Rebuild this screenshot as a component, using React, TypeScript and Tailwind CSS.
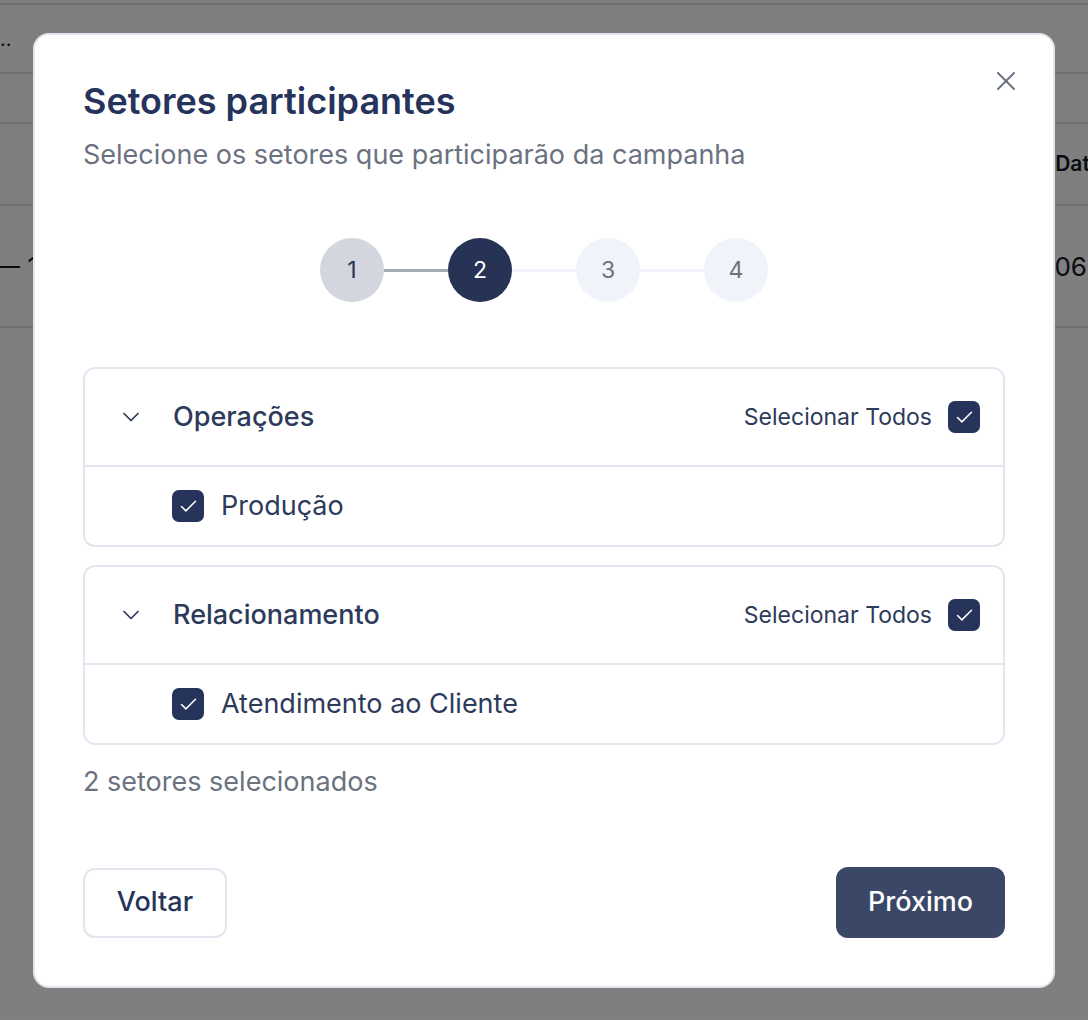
import React, { useState } from 'react';
import { ChevronDown, Check, X } from 'lucide-react';

const font = { fontFamily: 'Inter, "Noto Sans", sans-serif' };

interface Group {
  name: string;
  items: string[];
}

const groups: Group[] = [
  { name: 'Operações', items: ['Produção'] },
  { name: 'Relacionamento', items: ['Atendimento ao Cliente'] },
];

const Box: React.FC<{ checked: boolean }> = ({ checked }) => (
  <span
    className={`flex h-8 w-8 shrink-0 items-center justify-center rounded-[7px] ${
      checked ? 'bg-[#26335a]' : 'border-2 border-[#d5dae6] bg-white'
    }`}
  >
    {checked && <Check size={21} strokeWidth={1.75} className="text-white" />}
  </span>
);

const Stepper: React.FC = () => (
  <div className="flex items-center justify-center">
    <div className="flex h-16 w-16 items-center justify-center rounded-full bg-[#d3d6de] text-[23px] text-[#2a3550]">1</div>
    <div className="h-[3px] w-16 bg-[#a5aab7]" />
    <div className="flex h-16 w-16 items-center justify-center rounded-full bg-[#263354] text-[23px] text-white">2</div>
    <div className="h-[3px] w-16 bg-[#f0f3fa]" />
    <div className="flex h-16 w-16 items-center justify-center rounded-full bg-[#f0f3fa] text-[23px] text-[#6b7180]">3</div>
    <div className="h-[3px] w-16 bg-[#f0f3fa]" />
    <div className="flex h-16 w-16 items-center justify-center rounded-full bg-[#f0f3fa] text-[23px] text-[#6b7180]">4</div>
  </div>
);

const SectorCard: React.FC<{ group: Group }> = ({ group }) => (
  <div className="rounded-[12px] border-2 border-[#e3e6ef] bg-white">
    <div className="flex h-[98px] items-center justify-between border-b-2 border-[#e3e6ef] pl-[32px] pr-[23px]">
      <div className="flex items-center">
        <ChevronDown size={28} strokeWidth={1.5} className="text-[#2d3a5a]" />
        <span className="ml-[28px] text-[27px] font-medium text-[#2d3a5a]">{group.name}</span>
      </div>
      <div className="flex items-center gap-4">
        <span className="text-[23px] text-[#2d3a5a]">Selecionar Todos</span>
        <Box checked />
      </div>
    </div>
    {group.items.map((item) => (
      <div key={item} className="flex h-[78px] items-center pl-[87px]">
        <Box checked />
        <span className="ml-[17px] text-[27px] text-[#2d3a5a]">{item}</span>
      </div>
    ))}
  </div>
);

export default function App() {
  const [open] = useState(true);

  return (
    <div className="relative h-[1020px] w-[1088px] overflow-hidden bg-white" style={font}>
      {/* page behind the dialog */}
      <div className="flex flex-col text-[#111827]">
        <div className="h-[5px] border-b-2 border-[#dedede]" />
        <div className="flex h-[69px] items-center border-b-2 border-[#dedede] text-[20px]">..</div>
        <div className="h-[50px] border-b-2 border-[#dedede]" />
        <div className="flex h-[82px] items-center justify-end border-b-2 border-[#dedede] text-[21px] font-semibold">
          <span className="mr-[-14px]">Data</span>
        </div>
        <div className="flex h-[122px] items-center justify-between border-b-2 border-[#dedede] text-[26px]">
          <span className="ml-[-6px]">— 1</span>
          <span className="mr-[1px]">06</span>
        </div>
      </div>

      {open && (
        <div className="absolute inset-0 bg-black/50">
          <div className="absolute left-[33px] top-[33px] w-[1022px] rounded-[16px] border-2 border-[#e3e6ef] bg-white px-12 pb-12 pt-[44px]">
            <button className="absolute right-[31px] top-[30px] text-[#6b7280]">
              <X size={32} strokeWidth={1.5} />
            </button>
            <h2 className="text-[36px] font-semibold leading-[44px] text-[#26335a]">Setores participantes</h2>
            <p className="mt-[14px] text-[27px] leading-[36px] text-[#6b7280]">Selecione os setores que participarão da campanha</p>

            <div className="mt-[65px]">
              <Stepper />
            </div>

            <div className="mt-[65px] flex flex-col gap-[18px]">
              {groups.map((g) => (
                <SectorCard key={g.name} group={g} />
              ))}
            </div>

            <p className="mt-[19px] text-[27px] leading-[36px] text-[#6b7280]">2 setores selecionados</p>

            <div className="mt-[67px] flex items-center justify-between">
              <button className="h-[70px] w-[144px] rounded-[12px] border-2 border-[#e3e6ef] bg-white text-[27px] font-medium text-[#26335a]">
                Voltar
              </button>
              <button className="h-[71px] w-[169px] rounded-[12px] bg-[#3a4766] text-[27px] font-medium text-white">
                Próximo
              </button>
            </div>
          </div>
        </div>
      )}
    </div>
  );
}
